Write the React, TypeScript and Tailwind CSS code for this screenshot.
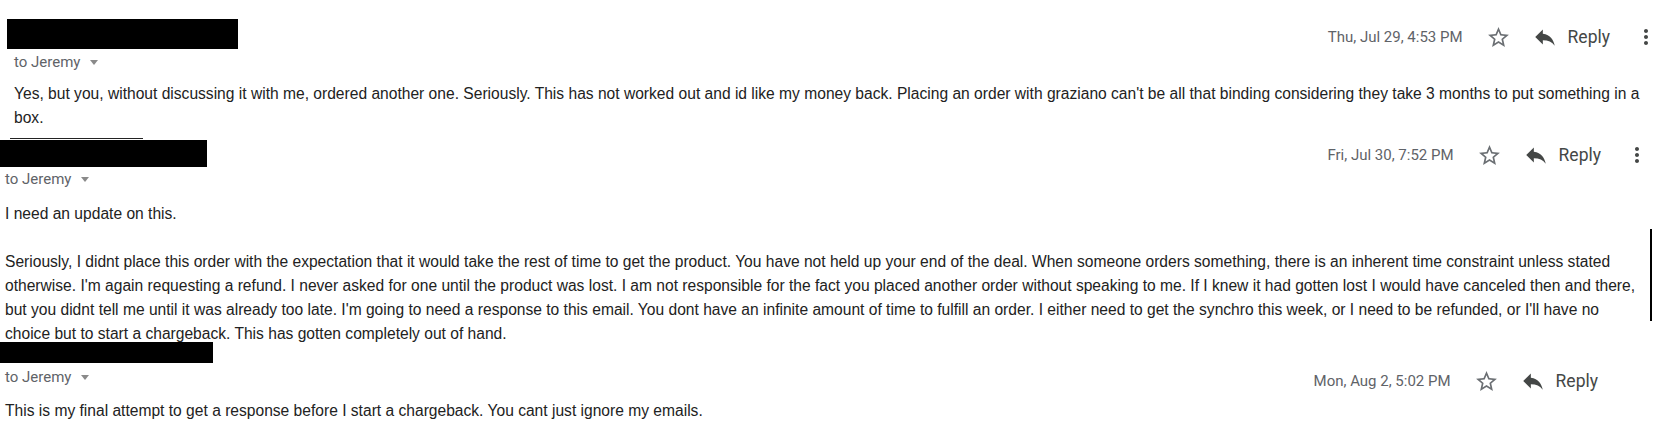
import type { ReactNode } from 'react'

const BODY_FONT = "font-['Liberation_Sans',Arial,sans-serif]"
const UI_FONT = "font-['Roboto','Liberation_Sans',Arial,sans-serif]"

function StarIcon() {
  return (
    <svg viewBox="0 0 24 24" className="h-[25px] w-[25px] fill-[#6b6f73]">
      <path d="M22 9.24l-7.19-.62L12 2 9.19 8.63 2 9.24l5.46 4.73L5.82 21 12 17.27 18.18 21l-1.63-7.03L22 9.24zM12 15.4l-3.76 2.27 1-4.28-3.32-2.88 4.38-.38L12 6.1l1.71 4.04 4.38.38-3.32 2.88 1 4.28L12 15.4z" />
    </svg>
  )
}

function ReplyIcon() {
  return (
    <svg viewBox="0 0 24 24" className="h-[26px] w-[26px] fill-[#444746]">
      <path d="M10 9V5l-7 7 7 7v-4.1c5 0 8.5 1.6 11 5.1-1-5-4-10-11-11z" />
    </svg>
  )
}

function MoreIcon() {
  return (
    <svg viewBox="0 0 24 24" className="h-[24px] w-[24px] fill-[#444746]">
      <path d="M12 8c1.1 0 2-.9 2-2s-.9-2-2-2-2 .9-2 2 .9 2 2 2zm0 2c-1.1 0-2 .9-2 2s.9 2 2 2 2-.9 2-2-.9-2-2-2zm0 6c-1.1 0-2 .9-2 2s.9 2 2 2 2-.9 2-2-.9-2-2-2z" />
    </svg>
  )
}

function Actions({ date, showMore = true }: { date: string; showMore?: boolean }) {
  return (
    <div className={`flex h-[24px] items-center ${UI_FONT}`}>
      <span className="text-[15px] text-[#5f6368]">{date}</span>
      <span className="ml-[23px]">
        <StarIcon />
      </span>
      <span className="ml-[21px]">
        <ReplyIcon />
      </span>
      <span className="ml-[10px] text-[17.5px] text-[#444746]">Reply</span>
      {showMore ? (
        <span className="ml-[24px]">
          <MoreIcon />
        </span>
      ) : null}
    </div>
  )
}

function ToLine({ indent }: { indent: string }) {
  return (
    <div className={`flex items-center text-[15px] leading-[18px] text-[#5f6368] ${UI_FONT} ${indent}`}>
      <span>to Jeremy</span>
      <svg viewBox="0 0 8 5" className="ml-[10px] h-[5px] w-[8px] fill-[#8a8a8a]">
        <polygon points="0,0 8,0 4,5" />
      </svg>
    </div>
  )
}

function Body({ className, children }: { className: string; children: ReactNode }) {
  return <div className={`text-[15.6px] leading-[24px] text-[#222] ${BODY_FONT} ${className}`}>{children}</div>
}

export default function App() {
  return (
    <div className="h-[438px] w-[1673px] overflow-hidden bg-white">
      {/* first message */}
      <section className="pl-[7px] pr-[15px] pt-[19px]">
        <div className="flex items-start justify-between">
          <div>
            <div className="h-[30px] w-[231px] bg-black" />
            <ToLine indent="ml-[7px] mt-[4px]" />
          </div>
          <div className="mt-[6px]">
            <Actions date="Thu, Jul 29, 4:53 PM" />
          </div>
        </div>
        <Body className="ml-[7px] mr-[14px] mt-[11px]">
          Yes, but you, without discussing it with me, ordered another one. Seriously. This has not worked out and id
          like my money back. Placing an order with graziano can't be all that binding considering they take 3 months
          to put something in a box.
        </Body>
        <div className="ml-[3px] mt-[8px] h-px w-[133px] bg-[#222]" />
      </section>

      {/* second message */}
      <section className="relative pr-[24px] pt-px">
        <div className="flex items-start justify-between">
          <div>
            <div className="h-[27px] w-[207px] bg-black" />
            <ToLine indent="ml-[5px] mt-[3px]" />
          </div>
          <div className="mt-[3px]">
            <Actions date="Fri, Jul 30, 7:52 PM" />
          </div>
        </div>
        <Body className="ml-[5px] mr-[8px] mt-[14px]">
          <p>I need an update on this.</p>
          <br />
          <p>
            Seriously, I didnt place this order with the expectation that it would take the rest of time to get the
            product. You have not held up your end of the deal. When someone orders something, there is an inherent
            time constraint unless stated otherwise. I'm again requesting a refund. I never asked for one until the
            product was lost. I am not responsible for the fact you placed another order without speaking to me. If I
            knew it had gotten lost I would have canceled then and there, but you didnt tell me until it was already
            too late. I'm going to need a response to this email. You dont have an infinite amount of time to fulfill
            an order. I either need to get the synchro this week, or I need to be refunded, or I'll have no choice but
            to start a chargeback. This has gotten completely out of hand.
          </p>
        </Body>
        <div className="absolute left-[1650px] top-[90px] h-[92px] w-[2px] bg-black" />
      </section>

      {/* third message */}
      <section className="-mt-[4px] pr-[75px]">
        <div className="flex items-start justify-between">
          <div>
            <div className="h-[21px] w-[213px] bg-black" />
            <ToLine indent="ml-[5px] mt-[5px]" />
          </div>
          <div className="mt-[27px]">
            <Actions date="Mon, Aug 2, 5:02 PM" showMore={false} />
          </div>
        </div>
        <Body className="ml-[5px] mt-[6px]">
          This is my final attempt to get a response before I start a chargeback. You cant just ignore my emails.
        </Body>
      </section>
    </div>
  )
}
